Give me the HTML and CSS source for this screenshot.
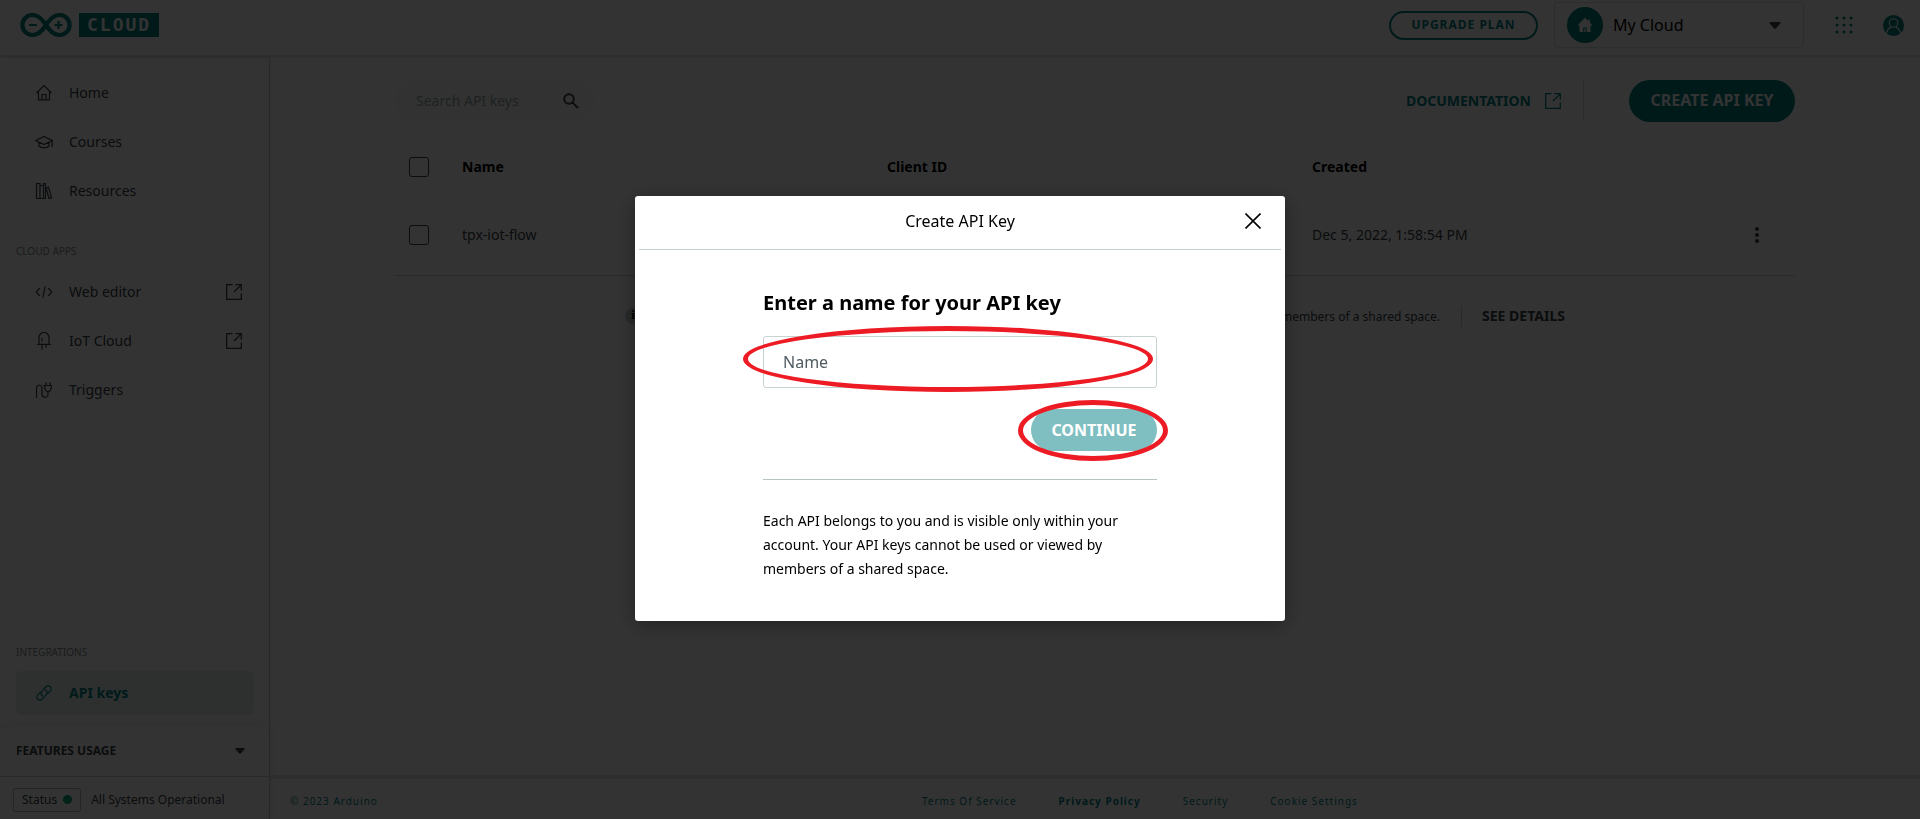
FILE: index.html
```html
<!DOCTYPE html>
<html lang="en">
<head>
<meta charset="utf-8">
<title>Arduino Cloud - API keys</title>
<link rel="stylesheet" href="styles.css">
</head>
<body>
<svg class="sprite" aria-hidden="true">
  <symbol id="external" viewBox="0 0 16 16"><path d="M6.500 .7H.7v14.600h14.600V9.500M9.300 .7h6v6M15.300 .7L8 8" fill="none" stroke="currentColor" stroke-width="1.300"/></symbol>
  <symbol id="caret" viewBox="0 0 10 6"><path d="M.8 0h8.400q.8.500.3 1.200L5.700 5.600q-.7.600-1.400 0L.5 1.200Q0 .5.8 0z" fill="currentColor"/></symbol>
</svg>
<div class="page">
  <header class="topbar">
    <a class="brand" href="#" aria-label="Arduino Cloud">
      <svg width="52" height="24" viewBox="0 0 52 24" fill="none" stroke="currentColor"><path d="M26 12C22.500 6.500 18.500 2 12.400 2a10 10 0 0 0 0 20C18.500 22 22.500 17.500 26 12s7.500-10 13.600-10a10 10 0 0 1 0 20C33.500 22 29.500 17.500 26 12z" stroke-width="4.200"/><path d="M9 12h8M34.500 12h8M38.500 8v8" stroke-width="2.200"/></svg>
      <span class="brand-tag">CLOUD</span>
    </a>
    <div class="topbar-actions">
      <button class="upgrade" type="button">UPGRADE PLAN</button>
      <button class="space" type="button">
        <span class="space-badge"><svg width="16" height="16" viewBox="0 0 16 16"><path d="M8 .8L.8 8l.9.9.8-.8V15h3.700v-4.500h3.600V15h3.700V8.100l.8.8.9-.9-2.200-2.200V2.500h-1.600v1.700zM7.300 11.500V15h1.400v-3.500z" fill="currentColor"/></svg></span>
        <span class="space-name">My Cloud</span>
        <svg width="12" height="7"><use href="#caret"/></svg>
      </button>
      <button class="icon-button apps" type="button" aria-label="Apps">
        <svg width="18" height="18" viewBox="0 0 18 18" fill="currentColor"><circle cx="2" cy="2" r="1.500"/><circle cx="9" cy="2" r="1.500"/><circle cx="16" cy="2" r="1.500"/><circle cx="2" cy="9" r="1.500"/><circle cx="9" cy="9" r="1.500"/><circle cx="16" cy="9" r="1.500"/><circle cx="2" cy="16" r="1.500"/><circle cx="9" cy="16" r="1.500"/><circle cx="16" cy="16" r="1.500"/></svg>
      </button>
      <button class="icon-button" type="button" aria-label="Account">
        <svg width="21" height="21" viewBox="0 0 20 20"><circle cx="10" cy="10" r="10" fill="currentColor"/><g fill="none" stroke="#fff" stroke-width="1.100"><circle cx="10" cy="7.600" r="4"/><path d="M3.200 17.300c.8-3.500 2.600-5 4.600-6.200M16.800 17.300c-.8-3.500-2.600-5-4.600-6.200"/></g></svg>
      </button>
    </div>
  </header>

  <aside class="sidebar">
    <nav class="nav" aria-label="Main">
      <a class="nav-item" href="#"><svg width="18" height="18" viewBox="0 0 18 18"><path d="M1.500 9L9 1.500 16.500 9M3.500 7.500v8.300h11V7.500M7 15.500v-5h4v5"/></svg><span>Home</span></a>
      <a class="nav-item" href="#"><svg width="18" height="18" viewBox="0 0 18 18"><path d="M.8 7.500L9 3.500l8.200 4L9 11.500zM4 9.500V13c2.500 2.500 7.500 2.500 10 0V9.500M17.200 7.500V14"/></svg><span>Courses</span></a>
      <a class="nav-item" href="#"><svg width="18" height="18" viewBox="0 0 18 18"><path d="M1.500 1.500h3.500v15H1.500zM5 3.500h3.500v13H5zM8.500 1.500h2v15h-2zM11 6l2.500-.7 3 10.500-2.500.7z"/></svg><span>Resources</span></a>
      <h2 class="nav-title">CLOUD APPS</h2>
      <a class="nav-item" href="#"><svg width="18" height="18" viewBox="0 0 18 18"><path d="M4.800 5L1.200 9l3.600 4M13.200 5l3.600 4-3.600 4M10.200 3.200L7.800 14.800"/></svg><span>Web editor</span><svg class="nav-ext" width="16" height="16"><use href="#external"/></svg></a>
      <a class="nav-item" href="#"><svg width="18" height="18" viewBox="0 0 18 18"><path d="M4 12V5.500a5 5 0 0 1 10 0V12M2 12.300h14M7 12.500v5.300M11 12.500v3.500M7 6v3.500"/></svg><span>IoT Cloud</span><svg class="nav-ext" width="16" height="16"><use href="#external"/></svg></a>
      <a class="nav-item" href="#"><svg width="18" height="18" viewBox="0 0 18 18"><path d="M1.500 17V6.500a2.800 2.800 0 0 1 5.500 0v6.800a2.800 2.800 0 0 0 6 0V11M8.500 4.500h8.500M9.700 4.500V7.500l2 3h2.600l2-3V4.500M11 1v3.500M15 1v3.500"/></svg><span>Triggers</span></a>
      <h2 class="nav-title nav-title-last">INTEGRATIONS</h2>
      <a class="nav-item nav-item-active" href="#"><svg width="18" height="18" viewBox="0 0 18 18"><path d="M8.200 12.200c-2.400-.8-2.900-3.400-1.300-5l3.900-4.200c1.300-1.300 3.200-1.300 4.400-.2s1.200 3 0 4.300l-2.800 2.900M9.800 5.800c2.400.8 2.900 3.400 1.300 5L7.200 15c-1.300 1.300-3.200 1.300-4.400.2s-1.200-3 0-4.300L5.600 8"/></svg><span>API keys</span></a>
    </nav>
    <div class="sidebar-foot">
      <button class="usage" type="button"><span>FEATURES USAGE</span><svg width="10" height="6"><use href="#caret"/></svg></button>
      <div class="status"><button class="status-button" type="button">Status<span class="status-dot"></span></button><span>All Systems Operational</span></div>
    </div>
  </aside>

  <main class="main">
    <div class="content">
      <div class="toolbar">
        <label class="search">
          <input type="search" placeholder="Search API keys" aria-label="Search API keys">
          <svg width="16" height="16" viewBox="0 0 16 16" fill="none" stroke="currentColor" stroke-width="2"><circle cx="6" cy="6" r="4.800"/><path d="M9.500 9.500l5.500 5.500"/></svg>
        </label>
        <a class="docs" href="#">DOCUMENTATION<svg width="16" height="16"><use href="#external"/></svg></a>
        <button class="button create" type="button">CREATE API KEY</button>
      </div>
      <table class="keys">
        <thead>
          <tr><th class="col-check"><input type="checkbox" aria-label="Select all"></th><th class="col">Name</th><th class="col">Client ID</th><th class="col">Created</th><th></th></tr>
        </thead>
        <tbody>
          <tr><td class="col-check"><input type="checkbox" aria-label="Select tpx-iot-flow"></td><td>tpx-iot-flow</td><td></td><td>Dec 5, 2022, 1:58:54 PM</td><td><button class="icon-button" type="button" aria-label="More options"><svg width="4" height="16" viewBox="0 0 4 16" fill="currentColor"><circle cx="2" cy="2" r="2"/><circle cx="2" cy="8" r="2"/><circle cx="2" cy="14" r="2"/></svg></button></td></tr>
        </tbody>
      </table>
      <div class="note">
        <span class="note-icon">i</span>
        <p class="note-text">Each API belongs to you and is visible only within your account. Your API keys cannot be used or viewed by members of a shared space.</p>
        <a class="note-link" href="#">SEE DETAILS</a>
      </div>
    </div>
  </main>

  <footer class="footer">
    <span>© 2023 Arduino</span>
    <nav class="footer-links" aria-label="Legal"><a href="#">Terms Of Service</a><a class="strong" href="#">Privacy Policy</a><a href="#">Security</a><a href="#">Cookie Settings</a></nav>
  </footer>
</div>

<div class="backdrop">
  <section class="modal" role="dialog" aria-modal="true" aria-labelledby="modal-title">
    <header class="modal-head">
      <h1 class="modal-title" id="modal-title">Create API Key</h1>
      <button class="icon-button modal-close" type="button" aria-label="Close"><svg width="16" height="16" viewBox="0 0 16 16" stroke="currentColor" stroke-width="1.600"><path d="M.5.5l15 15M15.500.5l-15 15"/></svg></button>
    </header>
    <form class="modal-body">
      <label class="modal-label" for="key-name">Enter a name for your API key</label>
      <div class="field"><input class="field-input" id="key-name" type="text" placeholder="Name"><span class="mark mark-field"></span></div>
      <div class="submit"><button class="button continue" type="button">CONTINUE</button><span class="mark mark-submit"></span></div>
      <p class="modal-text">Each API belongs to you and is visible only within your account. Your API keys cannot be used or viewed by members of a shared space.</p>
    </form>
  </section>
</div>
</body>
</html>
```
FILE: styles.css
```css
* { box-sizing: border-box; }
body {
  margin: 0;
  font-family: "Noto Sans", "Open Sans", sans-serif;
  font-size: 14px;
  line-height: 20px;
  color: #000;
  background: #fff;
}
a { color: inherit; text-decoration: none; }
button, input { font: inherit; color: inherit; }
button { border: 0; padding: 0; background: none; }
h1, h2, p { margin: 0; }
svg { display: block; flex: none; }
.sprite { display: none; }

.page {
  display: grid;
  grid-template: auto 1fr auto / 270px 1fr;
  height: 100vh;
}

/* Top bar */
.topbar {
  grid-column: 1 / -1;
  display: flex;
  align-items: center;
  justify-content: space-between;
  height: 58px;
  padding: 0 16px 5px 20px;
  border-bottom: 3px solid #e1e4e4;
}
.brand { display: flex; align-items: center; gap: 7px; color: #008184; }
.brand-tag {
  padding-left: 8px;
  width: 80px;
  background: #008184;
  color: #fff;
  font: bold 18px/24px "DejaVu Sans Mono", monospace;
  letter-spacing: 2px;
}
.topbar-actions { display: flex; align-items: center; }
.upgrade {
  width: 149px;
  height: 29px;
  border: 2px solid #008184;
  border-radius: 15px;
  color: #008184;
  font-size: 12px;
  font-weight: 700;
  letter-spacing: 1px;
}
.space {
  display: flex;
  align-items: center;
  width: 250px;
  height: 46px;
  margin: 0 31px 0 16px;
  padding: 0 22px 0 12px;
  border: 1px solid #dae3e3;
  border-radius: 3px;
  font-size: 16px;
}
.space-badge {
  display: grid;
  place-items: center;
  width: 36px;
  height: 36px;
  border-radius: 50%;
  background: #008184;
  color: #fff;
}
.space-name { flex: 1; padding-left: 10px; text-align: left; }
.space > svg { color: #374146; }
.icon-button { display: block; }
.topbar .icon-button { color: #008184; }
.apps { margin-right: 30px; }

/* Sidebar */
.sidebar {
  grid-row: 2 / 4;
  display: flex;
  flex-direction: column;
  border-right: 1px solid #c9d2d2;
  box-shadow: 2px 0 8px rgba(0, 0, 0, .04);
}
.nav {
  flex: 1;
  display: flex;
  flex-direction: column;
  gap: 5px;
  padding: 13px 15px 12px 16px;
  color: #374146;
}
.nav-item {
  display: flex;
  align-items: center;
  height: 44px;
  padding: 0 12px 0 19px;
  border-radius: 5px;
}
.nav-item > svg:first-child { fill: none; stroke: currentColor; stroke-width: 1.2; margin-right: 16px; }
.nav-ext { margin-left: auto; }
.nav-title {
  margin: 25px 0 6px;
  color: #7f8c8d;
  font-size: 10px;
  line-height: 16px;
  font-weight: 400;
}
.nav-title-last { margin: auto 0 6px; }
.nav-item-active { background: #e5f0f0; color: #008184; font-weight: 700; }
.sidebar-foot { border-radius: 8px 8px 0 0; box-shadow: 0 -2px 10px rgba(0, 0, 0, .08); }
.usage {
  display: flex;
  align-items: center;
  justify-content: space-between;
  width: 100%;
  height: 49px;
  padding: 0 24px 2px 16px;
  color: #374146;
  font-size: 12px;
  font-weight: 700;
}
.status {
  display: flex;
  align-items: center;
  gap: 10px;
  height: 43px;
  padding: 3px 0 0 13px;
  border-top: 1px solid #c9d2d2;
  font-size: 12px;
  color: #374146;
}
.status-button {
  display: flex;
  align-items: center;
  gap: 6px;
  height: 24px;
  padding: 0 8px;
  border: 1px solid #b5bfbf;
  border-radius: 2px;
}
.status-dot { width: 9px; height: 9px; border-radius: 50%; background: #00a878; }

/* Main */
.main { padding: 22px 24px 0; }
.content { max-width: 1400px; margin: 0 auto; }
.toolbar { display: flex; align-items: center; height: 42px; }
.search {
  display: flex;
  align-items: center;
  width: 200px;
  height: 40px;
  padding: 0 16px 0 21px;
  border-radius: 20px;
  background: #fafbfb;
}
.search input {
  flex: 1;
  min-width: 0;
  padding: 0;
  border: 0;
  outline: 0;
  background: none;
}
.search input::placeholder { color: #95a5a6; opacity: 1; }
.search svg { color: #374146; }
.docs {
  display: flex;
  align-items: center;
  gap: 14px;
  align-self: stretch;
  margin: 0 45px 0 auto;
  padding-right: 22px;
  border-right: 1px solid #dae3e3;
  color: #008184;
  font-weight: 700;
}
.button {
  height: 42px;
  border-radius: 21px;
  background: #008184;
  color: #fff;
  font-size: 16px;
  font-weight: 700;
}
.create { min-width: 166px; padding: 0 20px 2px; }

.keys {
  width: 100%;
  margin-top: 25px;
  border-collapse: collapse;
  table-layout: fixed;
  text-align: left;
  color: #374146;
}
.keys th, .keys td { padding: 0; }
.keys thead tr { height: 40px; color: #000; }
.keys tbody tr { height: 88px; border-bottom: 1px solid #c9d2d2; }
.keys tbody td { padding-top: 8px; }
.keys .col-check { width: 67px; padding-left: 14px; }
.col { width: 425px; }
.keys .icon-button { margin-left: 18px; }
.keys input {
  display: block;
  appearance: none;
  width: 20px;
  height: 20px;
  margin: 0;
  border: 1px solid #374146;
  border-radius: 3px;
}

.note {
  display: flex;
  align-items: center;
  justify-content: center;
  margin-top: 30px;
}
.note-icon {
  width: 16px;
  height: 16px;
  margin-right: 9px;
  border-radius: 50%;
  background: #c9d2d2;
  font: bold 11px/16px "DejaVu Serif", serif;
  text-align: center;
}
.note-text {
  min-width: 812px;
  padding-right: 21px;
  border-right: 1px solid #c9d2d2;
  font-size: 12px;
  line-height: 21px;
  text-align: right;
  color: #374146;
}
.note-link { padding-left: 20px; color: #374146; font-weight: 700; }

/* Footer */
.footer {
  display: flex;
  align-items: center;
  height: 44px;
  padding: 4px 18px 0 20px;
  border-top: 4px solid #e1e4e4;
  color: #008184;
  font-size: 10px;
  letter-spacing: 1px;
}
.footer-links { flex: 1; display: flex; justify-content: center; gap: 42px; }
.strong { font-weight: 700; }

/* Dialog */
.backdrop {
  position: fixed;
  inset: 0;
  display: flex;
  align-items: center;
  justify-content: center;
  padding-bottom: 3px;
  background: rgba(0, 0, 0, .8);
}
.modal {
  width: 650px;
  padding: 0 4px;
  border-radius: 3px;
  background: #fff;
  box-shadow: 0 4px 20px rgba(0, 0, 0, .35);
}
.modal-head {
  display: grid;
  grid-template-columns: 1fr auto 1fr;
  align-items: center;
  height: 54px;
  padding: 0 20px 2px;
  border-bottom: 1px solid #c9d2d2;
}
.modal-title { grid-column: 2; font-size: 16px; font-weight: 400; }
.modal-close { justify-self: end; }
.modal-body { padding: 39px 124px 40px; }
.modal-label { display: block; font-size: 20px; line-height: 28px; font-weight: 700; }
.field { position: relative; margin: 19px 0 21px; }
.field-input {
  display: block;
  width: 100%;
  height: 52px;
  padding: 0 19px;
  border: 1px solid #c9d2d2;
  border-radius: 3px;
  font-size: 16px;
}
.field-input::placeholder { color: #4e5b61; opacity: 1; }
.submit { position: relative; width: fit-content; margin-left: auto; }
.continue { display: block; min-width: 126px; padding: 0 20px; background: #7fbfc1; }
.mark { position: absolute; border: 5px solid #ed1c24; border-radius: 50%; pointer-events: none; }
.mark-field { inset: -10px 4px -4px -20px; }
.mark-submit { inset: -9px -11px -10px -13px; }
.modal-text {
  margin-top: 28px;
  padding-top: 29px;
  border-top: 1px solid #b5c3c3;
  line-height: 24px;
}
```
